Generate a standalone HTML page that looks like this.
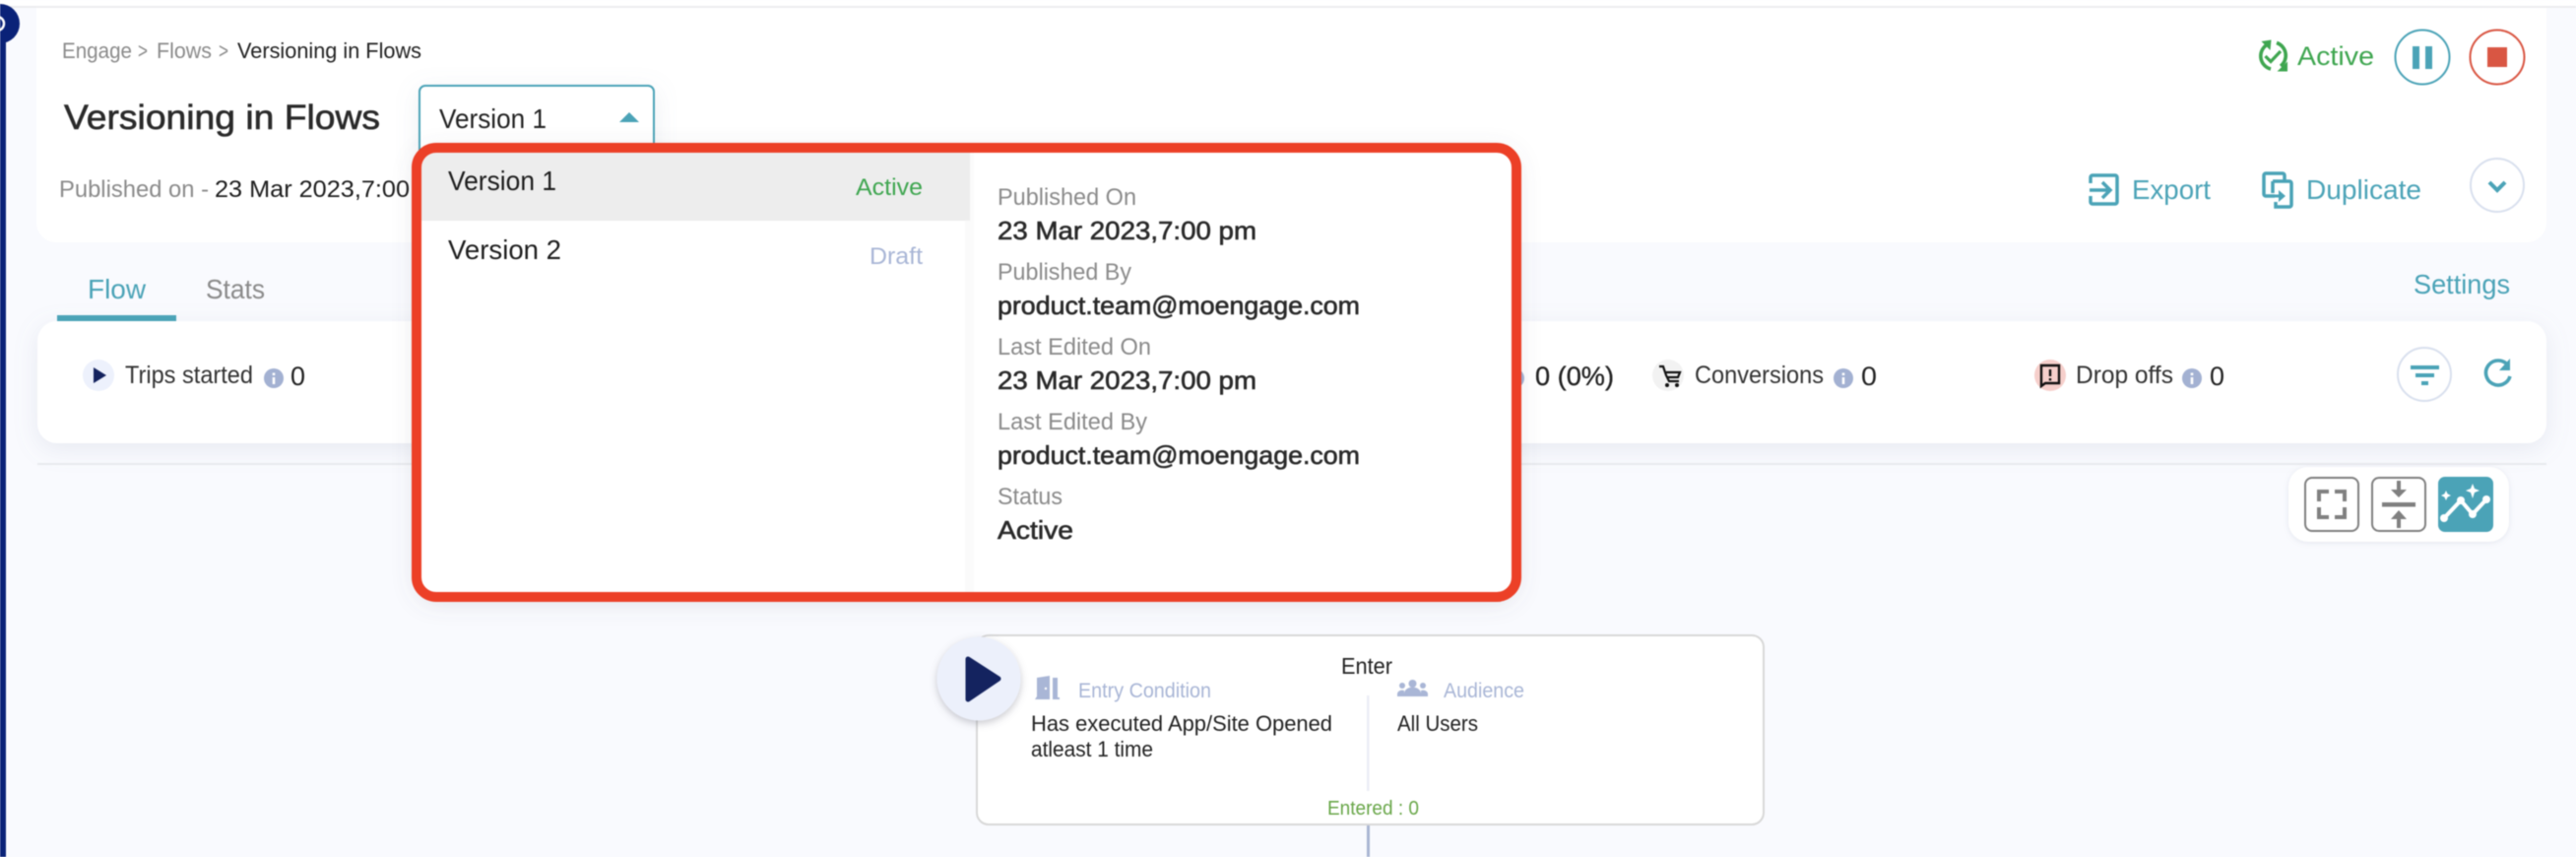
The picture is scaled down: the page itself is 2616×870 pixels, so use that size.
<!DOCTYPE html>
<html><head><meta charset="utf-8"><title>Versioning in Flows</title>
<style>
html,body{margin:0;padding:0;width:2616px;height:870px;overflow:hidden;background:#f9fafe}
svg{display:block;filter:blur(.45px)}
text{font-family:"Liberation Sans",sans-serif;font-size:26px;fill:#222}
.g{fill:#8b8b8b}.t{fill:#4ba3b7}.k{fill:#1d1d1d}.b{fill:#2a2a2a;stroke:#2a2a2a;stroke-width:.6px}
.l{fill:#a9b6d6}
</style></head><body>
<svg width="2616" height="870" viewBox="0 0 2616 870" xmlns="http://www.w3.org/2000/svg">
<defs>
<filter id="s1" x="-10%" y="-30%" width="120%" height="170%"><feDropShadow dx="0" dy="6" stdDeviation="12" flood-color="#8892ad" flood-opacity=".16"/></filter>
<filter id="s2" x="-10%" y="-10%" width="120%" height="125%"><feDropShadow dx="0" dy="4" stdDeviation="12" flood-color="#667" flood-opacity=".2"/></filter>
<filter id="s3" x="-30%" y="-30%" width="160%" height="170%"><feDropShadow dx="0" dy="3" stdDeviation="4" flood-color="#667" flood-opacity=".35"/></filter>
<filter id="s4" x="-30%" y="-30%" width="160%" height="160%"><feDropShadow dx="0" dy="1" stdDeviation="3" flood-color="#8892ad" flood-opacity=".2"/></filter>
</defs>
<rect width="2616" height="870" fill="#f9fafe"/>
<rect width="2616" height="6" fill="#fff"/><rect y="6" width="2616" height="2" fill="#ececee"/>
<!-- sidebar -->
<rect x="0" y="40" width="6" height="830" fill="#0a2278"/>
<circle cx="0" cy="24" r="20" fill="#0a2278"/><circle cx="-3" cy="24" r="7" fill="none" stroke="#fff" stroke-width="2.5"/>
<!-- header card -->
<path d="M37 8H2586V226a20 20 0 0 1-20 20H57a20 20 0 0 1-20-20Z" fill="#fff"/>
<text x="63" y="59" textLength="71" lengthAdjust="spacingAndGlyphs" class="g" style="font-size:22px">Engage</text>
<text x="140" y="59" textLength="10" lengthAdjust="spacingAndGlyphs" class="g" style="font-size:22px">&gt;</text>
<text x="159" y="59" textLength="56" lengthAdjust="spacingAndGlyphs" class="g" style="font-size:22px">Flows</text>
<text x="222" y="59" textLength="10" lengthAdjust="spacingAndGlyphs" class="g" style="font-size:22px">&gt;</text>
<text x="241" y="59" textLength="187" lengthAdjust="spacingAndGlyphs" style="font-size:22px">Versioning in Flows</text>
<text x="65" y="131" textLength="321" lengthAdjust="spacingAndGlyphs" class="b" style="font-size:35px">Versioning in Flows</text>
<rect x="426" y="87" width="238" height="80" rx="6" fill="#fff" stroke="#4ba3b7" stroke-width="2" filter="url(#s1)"/>
<text x="446" y="130" textLength="109" lengthAdjust="spacingAndGlyphs" style="font-size:28px">Version 1</text>
<path d="M629 124h20l-10-10Z" fill="#4ba3b7"/>
<text x="60" y="200" textLength="152" lengthAdjust="spacingAndGlyphs" class="g" style="font-size:24px">Published on -</text>
<text x="218" y="200" textLength="198" lengthAdjust="spacingAndGlyphs" class="k" style="font-size:24px">23 Mar 2023,7:00</text>
<!-- status -->
<g fill="none" stroke="#3fa650" stroke-width="3.6">
<path d="M2304 44.500A13.500 13.500 0 0 0 2306 70"/>
<path d="M2312 43.500A13.500 13.500 0 0 1 2316 67"/>
<path d="M2300.500 57l5.500 5.500 10-10.500" stroke-width="3.200"/>
</g>
<path d="M2296.500 42l10-1.500-1 10.500ZM2323 72.500h-10.500l10.500-10Z" fill="#3fa650"/>
<text x="2333" y="66" textLength="78" lengthAdjust="spacingAndGlyphs" style="font-size:27px;fill:#3fa650">Active</text>
<circle cx="2460" cy="58" r="27.5" fill="#fff" stroke="#4ba3b7" stroke-width="2"/>
<rect x="2450" y="47" width="7" height="23" fill="#4ba3b7"/><rect x="2463" y="47" width="7" height="23" fill="#4ba3b7"/>
<circle cx="2536" cy="58" r="27.5" fill="#fff" stroke="#d95643" stroke-width="2"/>
<rect x="2526" y="48" width="20" height="20" fill="#d95643"/>
<!-- export -->
<g fill="none" stroke="#4ba3b7" stroke-width="3.5">
<path d="M2123 186v-6a2 2 0 0 1 2-2h23a2 2 0 0 1 2 2v25a2 2 0 0 1-2 2h-23a2 2 0 0 1-2-2v-6"/>
<path d="M2122 193h20M2135 185l8 8-8 8"/>
</g>
<text x="2165" y="202" textLength="80" lengthAdjust="spacingAndGlyphs" class="t" style="font-size:28px">Export</text>
<g fill="none" stroke="#4ba3b7" stroke-width="3.5">
<path d="M2310 199h-9a2 2 0 0 1-2-2v-19a2 2 0 0 1 2-2h17a2 2 0 0 1 2 2v5"/>
<path d="M2308 184h17a2 2 0 0 1 2 2v22a2 2 0 0 1-2 2h-14v-5M2308 184v12"/>
<path d="M2306 199h10" stroke-width="3"/>
</g>
<path d="M2314 193l7 6-7 6Z" fill="#4ba3b7"/>
<text x="2342" y="202" textLength="117" lengthAdjust="spacingAndGlyphs" class="t" style="font-size:28px">Duplicate</text>
<circle cx="2536" cy="188" r="27" fill="#fff" stroke="#d9e0ee" stroke-width="2"/>
<path d="M2528 185l8 8 8-8" fill="none" stroke="#4ba3b7" stroke-width="4"/>
<!-- tabs -->
<text x="89" y="303" textLength="59" lengthAdjust="spacingAndGlyphs" class="t" style="font-size:28px">Flow</text>
<text x="209" y="303" textLength="60" lengthAdjust="spacingAndGlyphs" class="g" style="font-size:28px">Stats</text>
<text x="2451" y="298" textLength="98" lengthAdjust="spacingAndGlyphs" class="t" style="font-size:28px">Settings</text>
<!-- stats card -->
<rect x="38" y="326" width="2548" height="124" rx="20" fill="#fff" filter="url(#s1)"/>
<rect x="58" y="320" width="121" height="6" fill="#4ba3b7"/>
<rect x="38" y="470" width="2548" height="2" fill="#e8eaee"/>
<circle cx="100" cy="381" r="16" fill="#edf1fc"/><path d="M95 373l13 8-13 8Z" fill="#14235f"/>
<text x="127" y="389" textLength="130" lengthAdjust="spacingAndGlyphs" style="font-size:25px;fill:#333">Trips started</text>
<g id="i"><circle cx="278" cy="384" r="10" fill="#a3b1d2"/><rect x="276.7" y="383" width="2.6" height="7" fill="#fff"/><rect x="276.7" y="378.5" width="2.6" height="2.6" fill="#fff"/></g>
<text x="295" y="391" textLength="15" lengthAdjust="spacingAndGlyphs" style="font-size:27px">0</text>
<circle cx="1538" cy="384" r="10" fill="#a3b1d2"/>
<text x="1559" y="391" textLength="80" lengthAdjust="spacingAndGlyphs" style="font-size:27px;stroke:#222;stroke-width:.3px">0 (0%)</text>
<circle cx="1694" cy="381" r="16" fill="#f2f2f2"/>
<path d="M1685 372h4l3 9 3 6h10M1692 378h14l-2 5h-11" fill="none" stroke="#111" stroke-width="2.200"/>
<circle cx="1693" cy="391" r="2" fill="#111"/><circle cx="1703" cy="391" r="2" fill="#111"/>
<text x="1721" y="389" textLength="131" lengthAdjust="spacingAndGlyphs" style="font-size:25px;fill:#333">Conversions</text>
<use href="#i" x="1594"/>
<text x="1890" y="391" textLength="16" lengthAdjust="spacingAndGlyphs" style="font-size:27px">0</text>
<circle cx="2082" cy="381" r="16" fill="#f6cfcb"/>
<path d="M2073 371h18v18h-14l-4 3Z" fill="#f6cfcb" stroke="#111" stroke-width="2.4"/>
<rect x="2080.8" y="375" width="2.4" height="7" fill="#111"/><rect x="2080.8" y="384" width="2.4" height="2.4" fill="#111"/>
<text x="2108" y="389" textLength="99" lengthAdjust="spacingAndGlyphs" style="font-size:25px;fill:#333">Drop offs</text>
<use href="#i" x="1948"/>
<text x="2244" y="391" textLength="15" lengthAdjust="spacingAndGlyphs" style="font-size:27px">0</text>
<circle cx="2462" cy="380" r="27" fill="#fff" stroke="#d9e0ee" stroke-width="2"/>
<rect x="2448" y="371" width="29" height="4" fill="#4ba3b7"/><rect x="2453" y="379" width="19" height="4" fill="#4ba3b7"/><rect x="2459" y="387" width="7" height="4" fill="#4ba3b7"/>
<path d="M2547 371a12.5 12.5 0 1 0 2 11" fill="none" stroke="#4ba3b7" stroke-width="3.6"/>
<path d="M2549 364v12h-11Z" fill="#4ba3b7"/>
<!-- controls -->
<rect x="2324" y="474" width="224" height="76" rx="20" fill="#fff" filter="url(#s4)"/>
<rect x="2341" y="485" width="54" height="54" rx="7" fill="#fff" stroke="#808080" stroke-width="2"/>
<path d="M2355 509v-10h10M2371 499h10v10M2381 515v10h-10M2365 525h-10v-10" fill="none" stroke="#808080" stroke-width="4"/>
<rect x="2409" y="485" width="54" height="54" rx="7" fill="#fff" stroke="#808080" stroke-width="2"/>
<rect x="2419" y="510" width="34" height="4.5" fill="#808080"/>
<path d="M2434 488h4v9h6l-8 8-8-8h6ZM2436 518l8 9h-6v9h-4v-9h-6Z" fill="#808080"/>
<rect x="2476" y="484" width="56" height="56" rx="7" fill="#4ba3b7"/>
<path d="M2482 526l17-18 12 14 14-15" fill="none" stroke="#fff" stroke-width="4"/>
<circle cx="2482" cy="526" r="4" fill="#fff"/><circle cx="2499" cy="508" r="4" fill="#fff"/><circle cx="2511" cy="522" r="4" fill="#fff"/><circle cx="2525" cy="507" r="4" fill="#fff"/>
<path d="M2484 498l1.6 3.4 3.4 1.6-3.4 1.6-1.6 3.4-1.6-3.4-3.4-1.6 3.4-1.6ZM2511 491l2 5 5 2-5 2-2 6-2-6-5-2 5-2Z" fill="#fff"/>
<!-- flow card -->
<rect x="1388" y="838" width="3" height="32" fill="#a9b5d2"/>
<rect x="992" y="645" width="799" height="192" rx="12" fill="#fff" stroke="#d8d8d8" stroke-width="2"/>
<circle cx="994" cy="689" r="42.5" fill="#ecf0fb" filter="url(#s3)"/>
<path d="M983 669l31 20-31 21Z" fill="#14235f" stroke="#14235f" stroke-width="5" stroke-linejoin="round"/>
<text x="1362" y="684" textLength="52" lengthAdjust="spacingAndGlyphs" style="font-size:23px">Enter</text>
<path d="M1051 710l2-3v-19l13-2v24h-13ZM1069 688h5v20h2v2h-7Z" fill="#a9b6d6"/><circle cx="1062" cy="699" r="1.200" fill="#fff"/>
<text x="1095" y="708" textLength="135" lengthAdjust="spacingAndGlyphs" class="l" style="font-size:21px">Entry Condition</text>
<g fill="#a9b6d6"><circle cx="1434.500" cy="694" r="4"/><circle cx="1424" cy="696" r="3"/><circle cx="1445" cy="696" r="3"/><path d="M1426 707v-3a8 6 0 0 1 17 0v3ZM1419 707v-3a5 4 0 0 1 7-3v6ZM1450 707v-3a5 4 0 0 0-7-3v6Z"/></g>
<text x="1466" y="708" textLength="82" lengthAdjust="spacingAndGlyphs" class="l" style="font-size:21px">Audience</text>
<text x="1047" y="742" textLength="306" lengthAdjust="spacingAndGlyphs" style="font-size:22px">Has executed App/Site Opened</text>
<text x="1047" y="768" textLength="124" lengthAdjust="spacingAndGlyphs" style="font-size:22px">atleast 1 time</text>
<text x="1419" y="742" textLength="82" lengthAdjust="spacingAndGlyphs" style="font-size:22px">All Users</text>
<rect x="1388" y="706" width="2.500" height="97" fill="#eceef6"/>
<text x="1348" y="827" textLength="93" lengthAdjust="spacingAndGlyphs" style="font-size:20px;fill:#68a648">Entered : 0</text>
<!-- dropdown panel -->
<rect x="423" y="150" width="1117" height="456" rx="22" fill="#fff" filter="url(#s2)"/>
<rect x="980" y="155" width="5" height="446" fill="#fafafa"/><rect x="985" y="155" width="4" height="446" fill="#fbfbfb"/>
<path d="M428 224V168a13 13 0 0 1 13-13H985V224Z" fill="#ededed"/>
<text x="455" y="193" textLength="110" lengthAdjust="spacingAndGlyphs" class="k" style="font-size:28px">Version 1</text>
<text x="455" y="263" textLength="115" lengthAdjust="spacingAndGlyphs" class="k" style="font-size:28px">Version 2</text>
<text x="869" y="198" textLength="68" lengthAdjust="spacingAndGlyphs" style="font-size:24px;fill:#3fa650">Active</text>
<text x="883" y="268" textLength="54" lengthAdjust="spacingAndGlyphs" style="font-size:24px;fill:#a9b6d6">Draft</text>
<text x="1013" y="208" textLength="141" lengthAdjust="spacingAndGlyphs" class="g" style="font-size:24px">Published On</text>
<text x="1013" y="243" textLength="263" lengthAdjust="spacingAndGlyphs" class="b" style="font-size:26px">23 Mar 2023,7:00 pm</text>
<text x="1013" y="284" textLength="136" lengthAdjust="spacingAndGlyphs" class="g" style="font-size:24px">Published By</text>
<text x="1013" y="319" textLength="368" lengthAdjust="spacingAndGlyphs" class="b" style="font-size:26px">product.team@moengage.com</text>
<text x="1013" y="360" textLength="156" lengthAdjust="spacingAndGlyphs" class="g" style="font-size:24px">Last Edited On</text>
<text x="1013" y="395" textLength="263" lengthAdjust="spacingAndGlyphs" class="b" style="font-size:26px">23 Mar 2023,7:00 pm</text>
<text x="1013" y="436" textLength="152" lengthAdjust="spacingAndGlyphs" class="g" style="font-size:24px">Last Edited By</text>
<text x="1013" y="471" textLength="368" lengthAdjust="spacingAndGlyphs" class="b" style="font-size:26px">product.team@moengage.com</text>
<text x="1013" y="512" textLength="66" lengthAdjust="spacingAndGlyphs" class="g" style="font-size:24px">Status</text>
<text x="1013" y="547" textLength="77" lengthAdjust="spacingAndGlyphs" class="b" style="font-size:26px">Active</text>
<rect x="423" y="150" width="1117" height="456" rx="20" fill="none" stroke="#ec4027" stroke-width="10"/>
</svg>
</body></html>
